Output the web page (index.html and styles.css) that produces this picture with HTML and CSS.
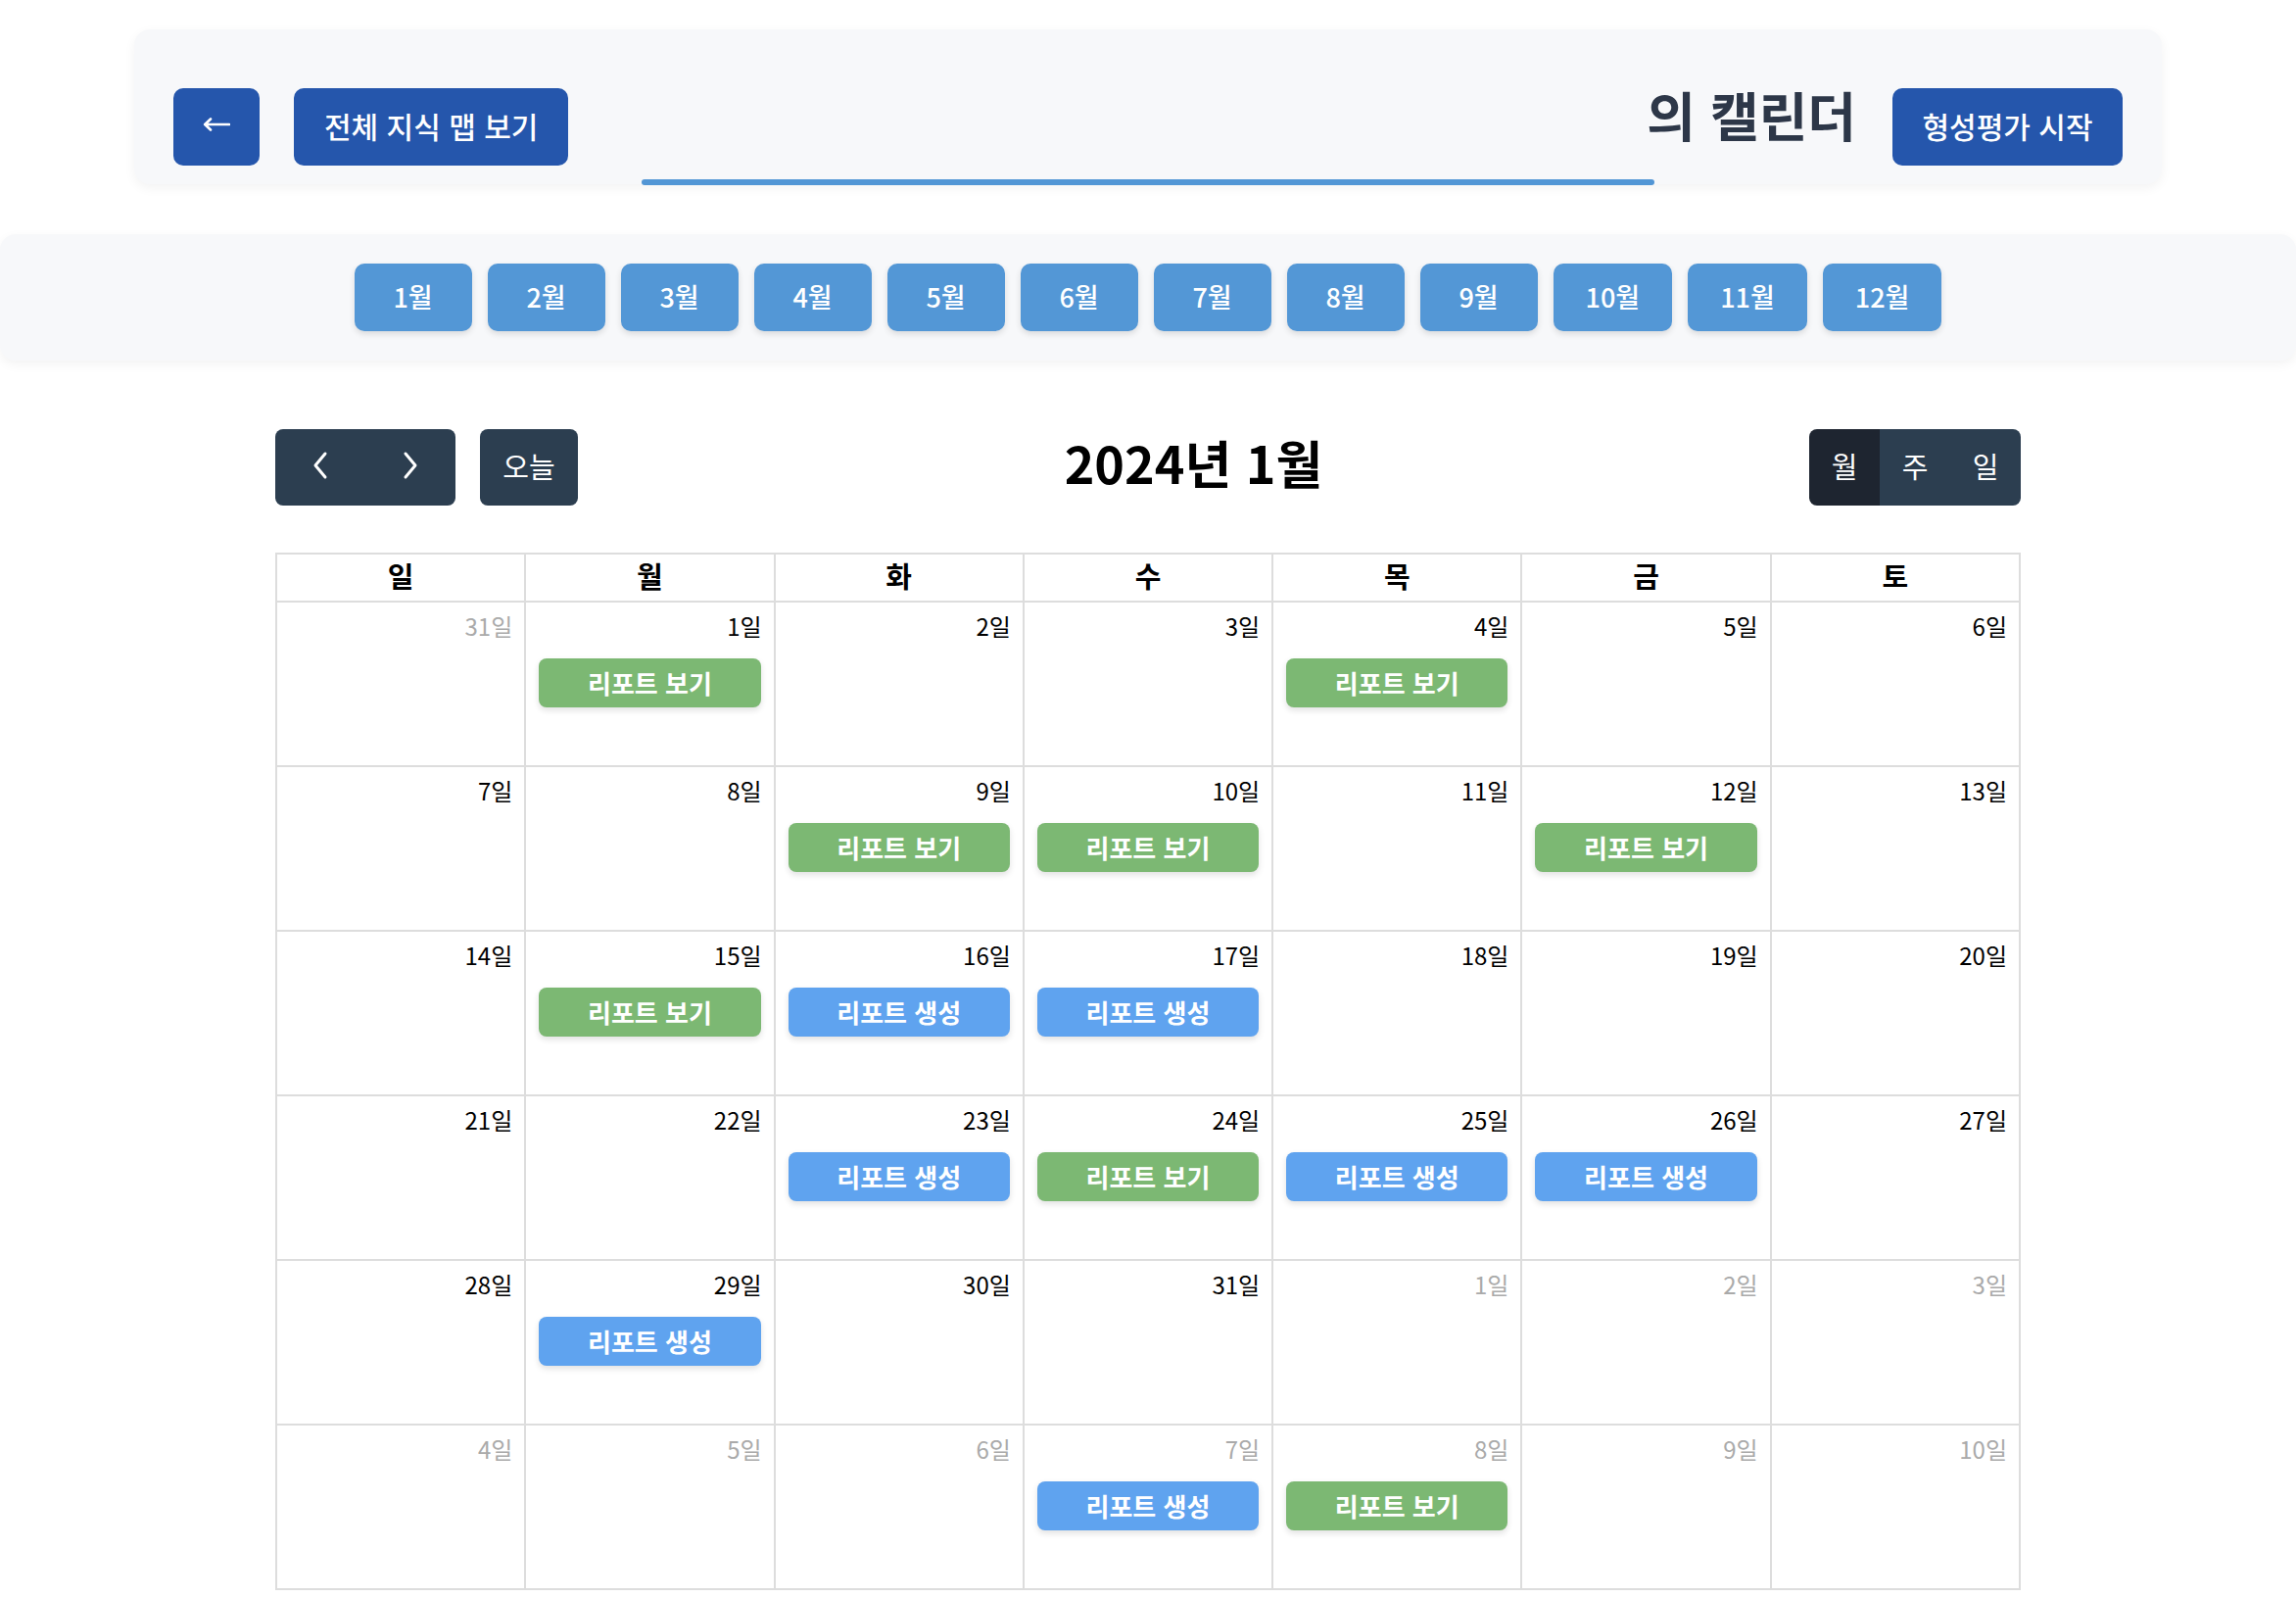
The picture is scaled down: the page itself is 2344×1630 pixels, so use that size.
FILE: index.html
```html
<!DOCTYPE html>
<html lang="ko">
<head>
<meta charset="utf-8">
<title>캘린더</title>
<link rel="stylesheet" href="styles.css">
</head>
<body>
<header class="top-card">
  <button class="btn-primary btn-back" aria-label="뒤로">
    <svg width="28" height="14" viewBox="0 0 28 14"><path d="M27 7H3M8 1.5L2.2 7 8 12.5" fill="none" stroke="#fff" stroke-width="2.6" stroke-linecap="round" stroke-linejoin="round"/></svg>
  </button>
  <button class="btn-primary btn-map">전체 지식 맵 보기</button>
  <h1 class="page-title">의 캘린더</h1>
  <button class="btn-primary btn-start">형성평가 시작</button>
  <span class="title-bar"></span>
</header>

<nav class="month-bar">
  <button class="month-btn">1월</button>
  <button class="month-btn">2월</button>
  <button class="month-btn">3월</button>
  <button class="month-btn">4월</button>
  <button class="month-btn">5월</button>
  <button class="month-btn">6월</button>
  <button class="month-btn">7월</button>
  <button class="month-btn">8월</button>
  <button class="month-btn">9월</button>
  <button class="month-btn">10월</button>
  <button class="month-btn">11월</button>
  <button class="month-btn">12월</button>
</nav>

<main class="calendar">
  <div class="toolbar">
    <div class="tool-left">
      <div class="btn-group">
        <button class="fc-btn icon-btn" aria-label="이전"><svg width="18" height="30" viewBox="0 0 18 30"><polyline points="14,3 4,15 14,27" fill="none" stroke="#fff" stroke-width="3" stroke-linecap="round" stroke-linejoin="round"/></svg></button>
        <button class="fc-btn icon-btn" aria-label="다음"><svg width="18" height="30" viewBox="0 0 18 30"><polyline points="4,3 14,15 4,27" fill="none" stroke="#fff" stroke-width="3" stroke-linecap="round" stroke-linejoin="round"/></svg></button>
      </div>
      <button class="fc-btn today-btn">오늘</button>
    </div>
    <h2 class="cal-title">2024년 1월</h2>
    <div class="btn-group">
      <button class="fc-btn view-btn active">월</button>
      <button class="fc-btn view-btn">주</button>
      <button class="fc-btn view-btn">일</button>
    </div>
  </div>

  <table class="grid">
    <thead>
      <tr><th>일</th><th>월</th><th>화</th><th>수</th><th>목</th><th>금</th><th>토</th></tr>
    </thead>
    <tbody>
      <tr>
        <td class="other"><div class="num">31일</div></td>
        <td><div class="num">1일</div><div class="ev view">리포트 보기</div></td>
        <td><div class="num">2일</div></td>
        <td><div class="num">3일</div></td>
        <td><div class="num">4일</div><div class="ev view">리포트 보기</div></td>
        <td><div class="num">5일</div></td>
        <td><div class="num">6일</div></td>
      </tr>
      <tr>
        <td><div class="num">7일</div></td>
        <td><div class="num">8일</div></td>
        <td><div class="num">9일</div><div class="ev view">리포트 보기</div></td>
        <td><div class="num">10일</div><div class="ev view">리포트 보기</div></td>
        <td><div class="num">11일</div></td>
        <td><div class="num">12일</div><div class="ev view">리포트 보기</div></td>
        <td><div class="num">13일</div></td>
      </tr>
      <tr>
        <td><div class="num">14일</div></td>
        <td><div class="num">15일</div><div class="ev view">리포트 보기</div></td>
        <td><div class="num">16일</div><div class="ev make">리포트 생성</div></td>
        <td><div class="num">17일</div><div class="ev make">리포트 생성</div></td>
        <td><div class="num">18일</div></td>
        <td><div class="num">19일</div></td>
        <td><div class="num">20일</div></td>
      </tr>
      <tr>
        <td><div class="num">21일</div></td>
        <td><div class="num">22일</div></td>
        <td><div class="num">23일</div><div class="ev make">리포트 생성</div></td>
        <td><div class="num">24일</div><div class="ev view">리포트 보기</div></td>
        <td><div class="num">25일</div><div class="ev make">리포트 생성</div></td>
        <td><div class="num">26일</div><div class="ev make">리포트 생성</div></td>
        <td><div class="num">27일</div></td>
      </tr>
      <tr>
        <td><div class="num">28일</div></td>
        <td><div class="num">29일</div><div class="ev make">리포트 생성</div></td>
        <td><div class="num">30일</div></td>
        <td><div class="num">31일</div></td>
        <td class="other"><div class="num">1일</div></td>
        <td class="other"><div class="num">2일</div></td>
        <td class="other"><div class="num">3일</div></td>
      </tr>
      <tr>
        <td class="other"><div class="num">4일</div></td>
        <td class="other"><div class="num">5일</div></td>
        <td class="other"><div class="num">6일</div></td>
        <td class="other"><div class="num">7일</div><div class="ev make">리포트 생성</div></td>
        <td class="other"><div class="num">8일</div><div class="ev view">리포트 보기</div></td>
        <td class="other"><div class="num">9일</div></td>
        <td class="other"><div class="num">10일</div></td>
      </tr>
    </tbody>
  </table>
</main>
</body>
</html>
```

FILE: styles.css
```css
* { box-sizing: border-box; }

body {
  margin: 0;
  background: #ffffff;
  font-family: "Noto Sans CJK KR", "Noto Sans", sans-serif;
  color: #000;
}

button {
  font-family: inherit;
  border: none;
  cursor: pointer;
}

/* ---------- top card ---------- */
.top-card {
  position: relative;
  width: 2070px;
  margin: 30px auto 0;
  padding: 60px 40px 19px;
  background: #f7f8fa;
  border-radius: 16px;
  box-shadow: 0 4px 12px rgba(0, 0, 0, 0.05);
  display: flex;
  align-items: center;
}

.btn-primary {
  height: 79px;
  padding-bottom: 4px;
  background: #2556ac;
  color: #fff;
  border-radius: 10px;
  font-size: 30px;
  font-weight: 500;
  display: flex;
  align-items: center;
  justify-content: center;
}

.btn-back {
  width: 88px;
  padding-bottom: 6px;
}

.btn-map {
  margin-left: 35px;
  padding-left: 31px;
  padding-right: 31px;
}

.page-title {
  flex: 1;
  margin: -3px 37px 22px 0;
  text-align: right;
  font-size: 54px;
  font-weight: 700;
  line-height: 60px;
  color: #2d3748;
}

.btn-start {
  width: 235px;
}

.title-bar {
  position: absolute;
  left: 50%;
  bottom: -1px;
  width: 1034px;
  height: 6px;
  margin-left: -517px;
  background: #5296d5;
  border-radius: 3px;
}

/* ---------- month bar ---------- */
.month-bar {
  margin-top: 51px;
  padding: 30px 0;
  background: #f7f8fa;
  border-radius: 16px;
  box-shadow: 0 4px 12px rgba(0, 0, 0, 0.05);
  display: flex;
  justify-content: center;
  gap: 16px;
}

.month-btn {
  min-width: 120px;
  height: 69px;
  padding: 0 33px 3px;
  background: #5397d6;
  color: #fff;
  border-radius: 10px;
  font-size: 27px;
  font-weight: 500;
  box-shadow: 0 3px 6px rgba(0, 0, 0, 0.12);
}

/* ---------- calendar ---------- */
.calendar {
  width: 1782px;
  margin: 70px auto 0;
}

.toolbar {
  display: flex;
  justify-content: space-between;
  align-items: center;
  height: 78px;
  margin-bottom: 48px;
}

.tool-left {
  display: flex;
  align-items: center;
  gap: 25px;
}

.btn-group {
  display: flex;
}

.fc-btn {
  height: 78px;
  padding: 0 0 5px;
  background: #2c3e50;
  color: #fff;
  font-size: 29px;
  display: flex;
  align-items: center;
  justify-content: center;
  border-radius: 0;
}

.btn-group .fc-btn:first-child { border-radius: 8px 0 0 8px; }
.btn-group .fc-btn:last-child { border-radius: 0 8px 8px 0; }

.icon-btn { width: 92px; }

.today-btn {
  width: 100px;
  border-radius: 8px;
}

.view-btn { width: 72px; }

.view-btn.active { background: #1e2530; }

.cal-title {
  margin: -10px 0 0;
  font-size: 52px;
  font-weight: 700;
  line-height: 1;
  color: #000;
}

.grid {
  width: 100%;
  table-layout: fixed;
  border-collapse: collapse;
}

.grid th,
.grid td {
  border: 2px solid #dddddd;
  padding: 0;
}

.grid th {
  height: 49px;
  padding-bottom: 5px;
  font-size: 29px;
  font-weight: 700;
  line-height: 40px;
}

.grid td {
  height: 168px;
  vertical-align: top;
}

.num {
  padding: 7px 12px 0;
  text-align: right;
  font-size: 24px;
  line-height: 34px;
  color: #000;
}

.other .num { color: #aaaaaa; }

.ev {
  margin: 16px 13px 0;
  height: 50px;
  border-radius: 8px;
  color: #fff;
  font-size: 26px;
  font-weight: 700;
  line-height: 50px;
  text-align: center;
  box-shadow: 0 3px 6px rgba(0, 0, 0, 0.12);
}

.ev.view { background: #7cb873; }
.ev.make { background: #5fa3ef; }
```
